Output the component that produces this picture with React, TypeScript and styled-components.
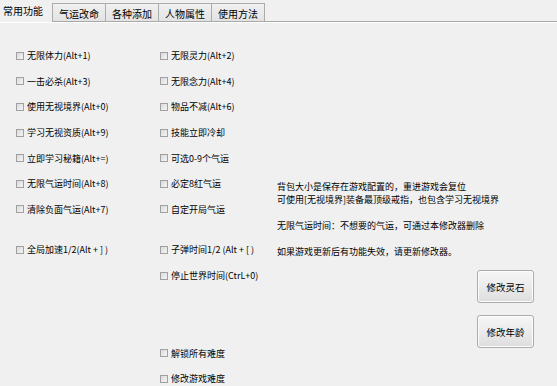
import styled, { createGlobalStyle } from 'styled-components';

const GlobalStyle = createGlobalStyle`
  html, body {
    margin: 0;
    padding: 0;
    background: #f0f0f0;
  }
  body {
    font-family: "Noto Sans CJK SC", "Noto Sans", sans-serif;
    color: #000;
  }
`;

const tabs = ['常用功能', '气运改命', '各种添加', '人物属性', '使用方法'];

interface Option {
  label: string;
  gap?: number;
}

const leftOptions: Option[] = [
  { label: '无限体力(Alt+1)' },
  { label: '一击必杀(Alt+3)' },
  { label: '使用无视境界(Alt+0)' },
  { label: '学习无视资质(Alt+9)' },
  { label: '立即学习秘籍(Alt+=)' },
  { label: '无限气运时间(Alt+8)' },
  { label: '清除负面气运(Alt+7)' },
  { label: '全局加速1/2(Alt + ] )', gap: 15 },
];

const middleOptions: Option[] = [
  { label: '无限灵力(Alt+2)' },
  { label: '无限念力(Alt+4)' },
  { label: '物品不减(Alt+6)' },
  { label: '技能立即冷却' },
  { label: '可选0-9个气运' },
  { label: '必定8红气运' },
  { label: '自定开局气运' },
  { label: '子弹时间1/2 (Alt + [ )', gap: 15 },
  { label: '停止世界时间(CtrL+0)' },
  { label: '解锁所有难度', gap: 52 },
  { label: '修改游戏难度' },
];

const notes = `背包大小是保存在游戏配置的，重进游戏会复位
可使用[无视境界]装备最顶级戒指，也包含学习无视境界

无限气运时间：不想要的气运，可通过本修改器删除

如果游戏更新后有功能失效，请更新修改器。`;

const OptionList = ({ options }: { options: Option[] }) => (
  <>
    {options.map((o) => (
      <Row key={o.label} $gap={o.gap ?? 0}>
        <Box />
        <span>{o.label}</span>
      </Row>
    ))}
  </>
);

export default function App() {
  return (
    <Window>
      <GlobalStyle />
      <TabBar>
        {tabs.map((t, i) => (
          <Tab key={t} $active={i === 0}>
            {t}
          </Tab>
        ))}
      </TabBar>
      <Content>
        <LeftColumn>
          <OptionList options={leftOptions} />
        </LeftColumn>
        <MiddleColumn>
          <OptionList options={middleOptions} />
        </MiddleColumn>
        <RightColumn>
          <Notes>{notes}</Notes>
          <Button $top={12.5}>修改灵石</Button>
          <Button $top={12}>修改年龄</Button>
        </RightColumn>
      </Content>
    </Window>
  );
}

const Window = styled.div`
  width: 557px;
  height: 386px;
  overflow: hidden;
  background: #f0f0f0;
`;

const TabBar = styled.div`
  display: flex;
  align-items: flex-end;
  height: 21px;
  border-bottom: 1px solid #a8a8a8;
  box-shadow: 0 1px 0 #ffffff;
`;

const Tab = styled.div<{ $active: boolean }>`
  box-sizing: border-box;
  display: flex;
  align-items: center;
  font-size: 10px;
  white-space: nowrap;
  ${(p) =>
    p.$active
      ? `
    width: 52px;
    height: 22px;
    margin-bottom: -1px;
    padding: 0 0 1px 3px;
    background: #f0f0f0;
    position: relative;
    z-index: 1;
  `
      : `
    width: 54px;
    height: 18px;
    margin-left: -1px;
    justify-content: center;
    padding-top: 1px;
    border: 1px solid #acacac;
    border-bottom: none;
    background: linear-gradient(#f0f0f0, #e3e3e3);
  `}
  &:nth-child(2) {
    margin-left: 0;
  }
`;

const Content = styled.div`
  display: flex;
  padding-left: 16px;
`;

const LeftColumn = styled.div`
  width: 144px;
  padding-top: 21px;
  display: flex;
  flex-direction: column;
`;

const MiddleColumn = styled(LeftColumn)`
  width: 117px;
`;

const RightColumn = styled.div`
  flex: 1;
  padding-top: 157.5px;
  display: flex;
  flex-direction: column;
`;

const Row = styled.label<{ $gap: number }>`
  display: flex;
  align-items: center;
  gap: 3px;
  height: 25.6px;
  margin-top: ${(p) => p.$gap}px;
  font-size: 9px;
  white-space: nowrap;
`;

const Box = styled.span`
  box-sizing: border-box;
  flex: none;
  width: 8px;
  height: 8px;
  border: 1px solid #a0a0a0;
  background: linear-gradient(135deg, #dadada, #f6f6f6);
`;

const Notes = styled.div`
  font-size: 9px;
  line-height: 13px;
  white-space: pre-line;
`;

const Button = styled.div<{ $top: number }>`
  box-sizing: border-box;
  align-self: flex-end;
  margin: ${(p) => p.$top}px 23px 0 0;
  width: 57px;
  height: 33px;
  display: flex;
  align-items: center;
  justify-content: center;
  border: 1px solid #acacac;
  border-radius: 3px;
  background: linear-gradient(#f6f6f6 0%, #ebebeb 50%, #dddddd 100%);
  box-shadow: inset 0 0 0 1px #fcfcfc;
  font-size: 9.5px;
`;
